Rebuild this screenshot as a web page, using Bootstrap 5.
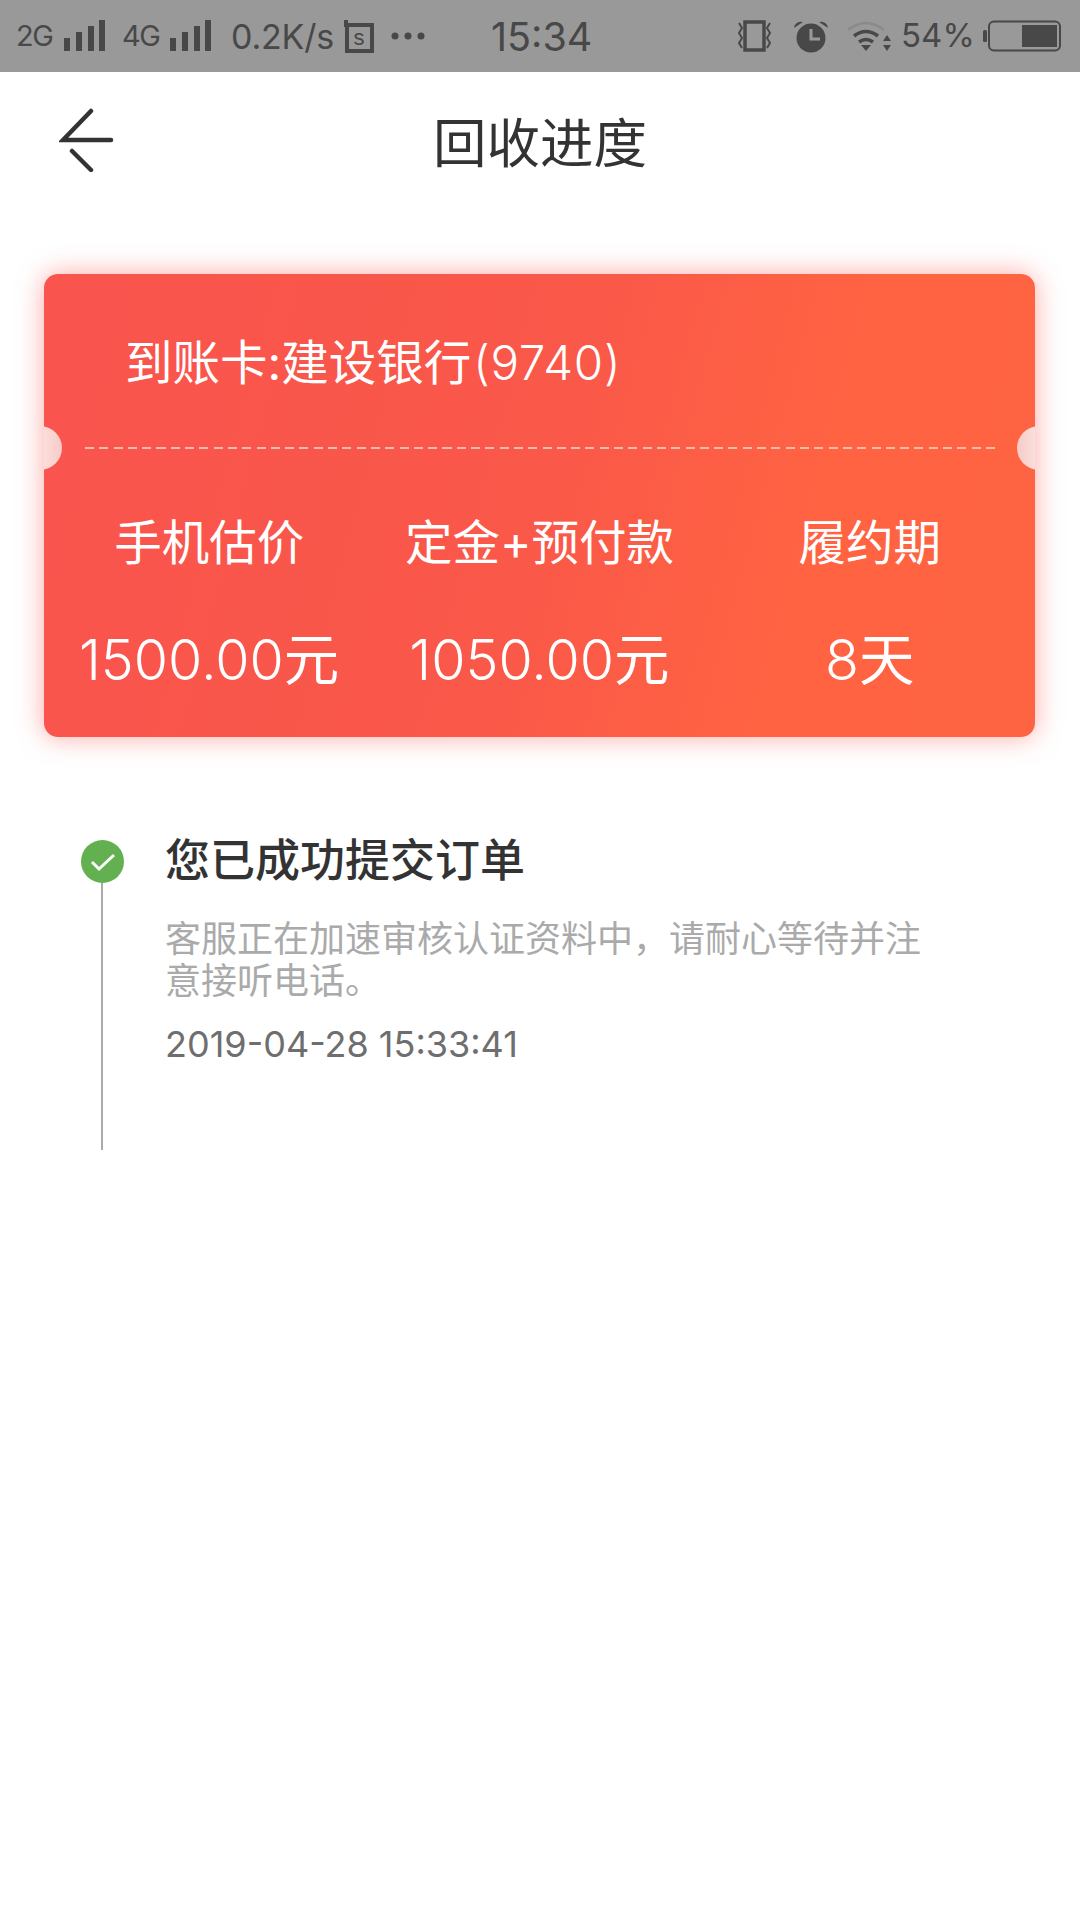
<!DOCTYPE html>
<html lang="zh-CN">
<head>
    <meta charset="UTF-8">
    <title>回收进度</title>
    <link href="https://cdn.jsdelivr.net/npm/bootstrap@5.3.0/dist/css/bootstrap.min.css" rel="stylesheet">
    <style>
        body {
            font-family: "Inter", "Noto Sans CJK SC", sans-serif;
            background: #fff;
            color: #333;
        }
        .status-bar {
            height: 72px;
            background: #999;
            color: #484848;
            padding: 0 0 0 16px;
        }
        .status-left { width: 475px; }
        .net { font-size: 29px; letter-spacing: -1.5px; width: 48px; }
        .speed { font-size: 34px; margin-left: 19px; width: 113px; letter-spacing: -.2px; }
        .clock { font-size: 39.5px; width: 244px; padding-top: 4px; }
        .icon-alarm { margin-left: 19px; }
        .icon-wifi { margin-left: 17px; }
        .pct { font-size: 33px; width: 82px; margin-left: 8px; }
        .top-nav { height: 144px; }
        .top-nav h1 { font-size: 53.5px; font-weight: 400; margin: 0; }
        .back-btn { left: 59px; top: 36px; }
        .ticket {
            margin: 58px 45px 0 44px;
            height: 463px;
            border-radius: 14px;
            background: linear-gradient(105deg, #f9544e 0%, #fa5849 50%, #ff6342 75%, #ff6442 100%);
            box-shadow: 0 0 26px rgba(250, 85, 75, .5);
            color: #fff;
        }
        .ticket-bank { font-size: 47.5px; padding: 61px 0 0 81px; line-height: 56px; height: 173px; }
        .ticket-bank .thin-num { letter-spacing: .7px; margin-left: 2px; }
        .ticket-dash {
            height: 2px;
            margin: 0 40px 0 41px;
            background: repeating-linear-gradient(90deg, #ffb9ad 0 9px, transparent 9px 14.3px);
        }
        .notch {
            width: 44px;
            height: 44px;
            border-radius: 50%;
            top: 152px;
        }
        .notch-l { left: -26px; background: linear-gradient(90deg, transparent 26px, #fbdedb 26px, #f6cbc6 100%); }
        .notch-r { right: -26px; background: linear-gradient(270deg, transparent 26px, #fbdedb 26px, #f6cbc6 100%); }
        .ticket-col { font-size: 47.5px; line-height: 56px; }
        .ticket-cols { padding-top: 66px; }
        .ticket-val { margin-top: 61px; font-size: 55.5px; }
        .thin-num { font-weight: 300; }
        .step { margin: 103px 0 0 81px; }
        .step-mark { width: 43px; }
        .step-dot {
            width: 43px;
            height: 43px;
            background: #62b04f;
        }
        .step-line { width: 2px; height: 267px; background: #aaa; margin-right: 1px; }
        .step-body { margin-left: 41px; width: 770px; }
        .step-title { font-size: 45px; font-weight: 500; line-height: 46px; margin: -2px 0 0; }
        .step-desc { font-size: 36px; line-height: 42px; color: #aaa; margin: 34px 0 0; }
        .step-time { font-size: 36px; line-height: 44px; color: #6e6e6e; margin-top: 20px; }
    </style>
</head>
<body>
<div class="status-bar d-flex align-items-center">
    <div class="status-left d-flex align-items-center">
        <span class="net">2G</span>
        <svg width="42" height="32" viewBox="0 0 42 32" fill="#484848"><rect x="0" y="18" width="6" height="13"/><rect x="12" y="12" width="6" height="19"/><rect x="24" y="6" width="6" height="25"/><rect x="35" y="0" width="6" height="31"/></svg>
        <span class="net ms-3">4G</span>
        <svg width="42" height="32" viewBox="0 0 42 32" fill="#484848"><rect x="0" y="18" width="6" height="13"/><rect x="12" y="12" width="6" height="19"/><rect x="24" y="6" width="6" height="25"/><rect x="35" y="0" width="6" height="31"/></svg>
        <span class="speed">0.2K/s</span>
        <svg width="30" height="33" viewBox="0 0 30 33" fill="none" stroke="#484848" stroke-width="4"><path d="M2 0v5M0 5h30M28 5v26H3V5"/><text x="15" y="25" font-size="22" font-family="Liberation Sans" fill="#484848" stroke="none" text-anchor="middle">s</text></svg>
        <svg class="ms-3" width="36" height="10" viewBox="0 0 36 10" fill="#484848"><circle cx="5" cy="5" r="3.5"/><circle cx="18" cy="5" r="3.5"/><circle cx="31" cy="5" r="3.5"/></svg>
    </div>
    <span class="clock">15:34</span>
    <svg width="39" height="32" viewBox="0 0 39 32" fill="none" stroke="#484848"><rect x="10" y="2" width="19" height="28" stroke-width="3.5"/><path d="M4 3l3 5-3 5 3 5-3 5 3 5M35 3l-3 5 3 5-3 5 3 5-3 5" stroke-width="2"/></svg>
    <svg class="icon-alarm" width="36" height="34" viewBox="0 0 36 34"><circle cx="18" cy="19" r="14.5" fill="#484848"/><path d="M18 10v10h9" fill="none" stroke="#999" stroke-width="3"/><path d="M1 9a7 7 0 0 1 9-6zM35 9a7 7 0 0 0-9-6z" fill="#484848"/></svg>
    <svg class="icon-wifi" width="47" height="34" viewBox="0 0 47 34" fill="none" stroke="#484848"><path d="M2 11q18-14 36 0" stroke="#8a8a8a" stroke-width="2.5"/><path d="M8 17q12-9 24 0M13 23q7-5 14 0" stroke-width="3.5"/><path d="M15 26h10l-5 6z" fill="#484848" stroke="none"/><path d="M41 16l4 6h-8zM41 32l4-6h-8z" fill="#484848" stroke="none"/></svg>
    <span class="pct">54%</span>
    <svg width="78" height="32" viewBox="0 0 78 32"><rect x="0" y="10" width="4" height="12" rx="1.5" fill="#484848"/><rect x="6" y="1.5" width="71" height="29" rx="5" fill="none" stroke="#484848" stroke-width="2"/><rect x="39" y="5" width="35" height="22" fill="#484848"/></svg>
</div>

<div class="top-nav position-relative d-flex align-items-center justify-content-center">
    <svg class="back-btn position-absolute" width="56" height="64" viewBox="0 0 56 64" fill="none" stroke="#333" stroke-width="4.5" stroke-linecap="round"><path d="M52 32H4L32 3M13 43l19 19"/></svg>
    <h1>回收进度</h1>
</div>

<div class="ticket position-relative">
    <div class="notch notch-l position-absolute"></div>
    <div class="notch notch-r position-absolute"></div>
    <div class="ticket-bank">到账卡:建设银行<span class="thin-num">(9740)</span></div>
    <div class="ticket-dash"></div>
    <div class="row g-0 text-center ticket-cols">
        <div class="col-4 ticket-col">手机估价<div class="ticket-val"><span class="thin-num">1500.00</span>元</div></div>
        <div class="col-4 ticket-col">定金+预付款<div class="ticket-val"><span class="thin-num">1050.00</span>元</div></div>
        <div class="col-4 ticket-col">履约期<div class="ticket-val"><span class="thin-num">8</span>天</div></div>
    </div>
</div>

<div class="step d-flex">
    <div class="step-mark d-flex flex-column align-items-center flex-shrink-0">
        <div class="step-dot rounded-circle d-flex align-items-center justify-content-center">
            <svg width="26" height="20" viewBox="0 0 26 20" fill="none" stroke="#fff" stroke-width="3"><path d="M2 10l7 7L24 3"/></svg>
        </div>
        <div class="step-line"></div>
    </div>
    <div class="step-body">
        <p class="step-title">您已成功提交订单</p>
        <p class="step-desc">客服正在加速审核认证资料中，请耐心等待并注意接听电话。</p>
        <div class="step-time">2019-04-28 15:33:41</div>
    </div>
</div>
<script src="https://cdn.jsdelivr.net/npm/bootstrap@5.3.0/dist/js/bootstrap.bundle.min.js"></script>
</body>
</html>
